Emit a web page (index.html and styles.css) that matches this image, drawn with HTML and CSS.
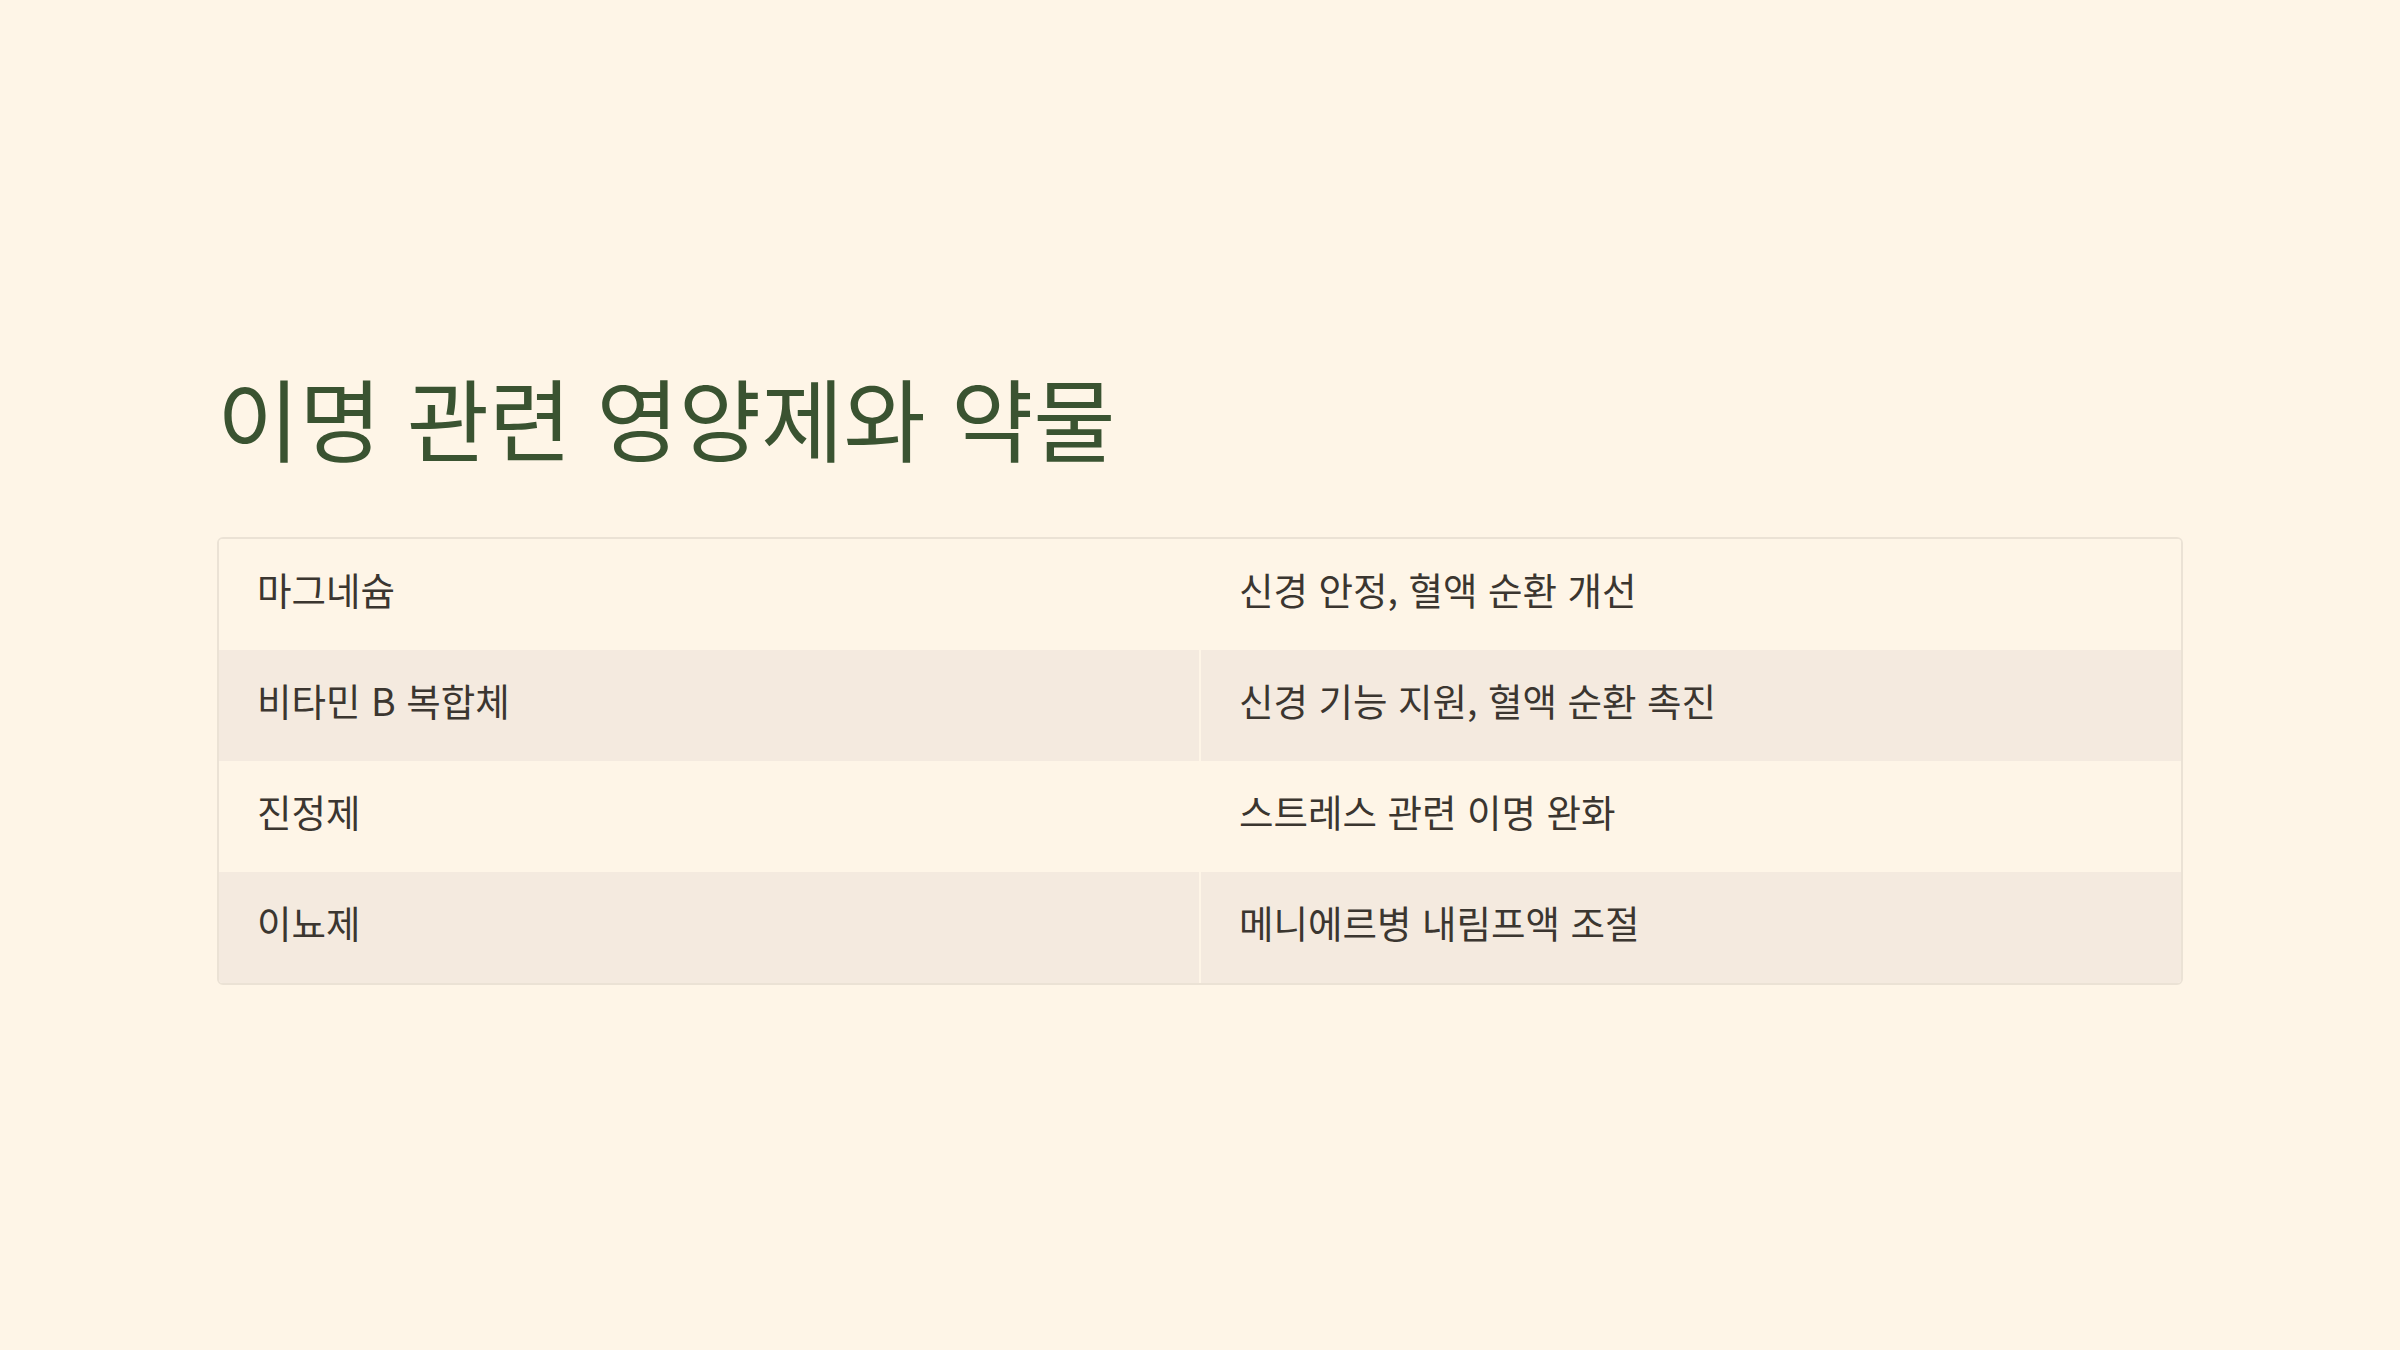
FILE: index.html
```html
<!DOCTYPE html>
<html lang="ko">
<head>
    <meta charset="UTF-8">
    <meta name="viewport" content="width=device-width, initial-scale=1.0">
    <title>이명 관련 영양제와 약물</title>
    <link rel="stylesheet" href="styles.css">
</head>
<body>
    <div class="slide">
        <h1 class="title">이명 관련 영양제와 약물</h1>

        <div class="table">
            <div class="row">
                <div class="cell">마그네슘</div>
                <div class="cell">신경 안정, 혈액 순환 개선</div>
            </div>
            <div class="row alt">
                <div class="cell">비타민 B 복합체</div>
                <div class="cell">신경 기능 지원, 혈액 순환 촉진</div>
            </div>
            <div class="row">
                <div class="cell">진정제</div>
                <div class="cell">스트레스 관련 이명 완화</div>
            </div>
            <div class="row alt">
                <div class="cell">이뇨제</div>
                <div class="cell">메니에르병 내림프액 조절</div>
            </div>
        </div>
    </div>
</body>
</html>
```

FILE: styles.css
```css
body {
margin: 0;
background-color: #fef5e7;
font-family: "Noto Sans CJK KR", "Noto Sans", sans-serif;
}

.slide {
height: 1350px;
box-sizing: border-box;
padding: 0 217px;
display: flex;
flex-direction: column;
justify-content: center;
}

.title {
margin: 0 0 70px 0;
font-size: 89.5px;
font-weight: 400;
line-height: 1.15;
color: #3a5331;
}

.table {
border: solid 2px #ebe2d5;
border-radius: 6px;
overflow: hidden;
}

.row {
display: grid;
grid-template-columns: 1fr 1fr;
gap: 2px;
background-color: #fef5e7;
}

.cell {
box-sizing: border-box;
padding: 0 38px 12px 38px;
height: 111px;
display: flex;
align-items: center;
font-size: 37.5px;
color: #3b3630;
background-color: #fef5e7;
}

.row.alt .cell {
background-color: #f4eadf;
}
```
